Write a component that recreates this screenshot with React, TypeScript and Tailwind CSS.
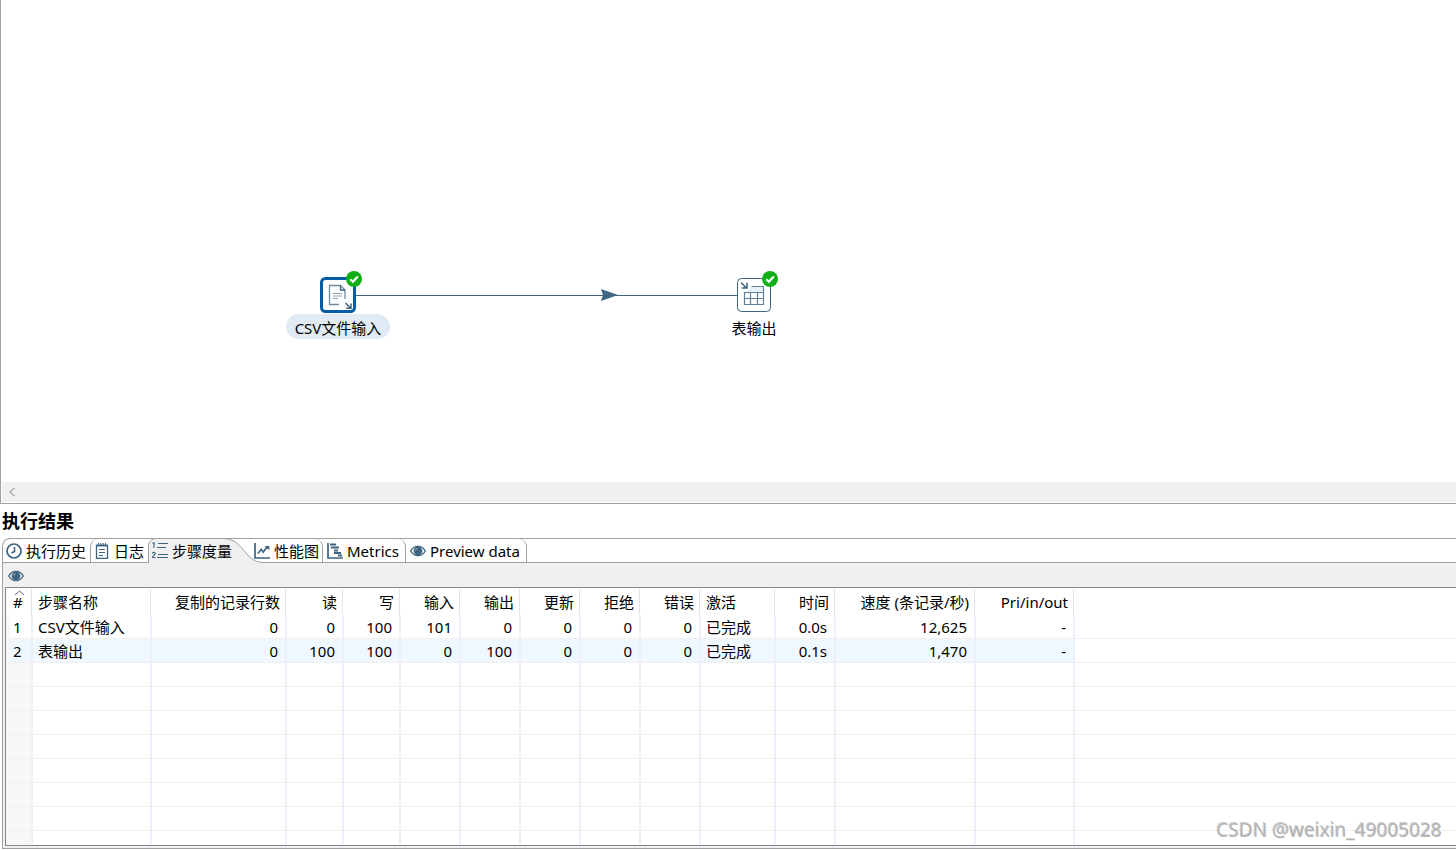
import React, { useState } from 'react'
import { clsx } from 'clsx'

interface IconProps {
  className?: string
}

const EyeIcon: React.FC<IconProps> = ({ className }) => (
  <svg className={className} width="16" height="16" viewBox="0 0 16 16" fill="none">
    <path d="M0.7 8C2.4 4.9 5 3.4 8 3.4s5.600 1.500 7.300 4.600c-1.700 3.100-4.300 4.600-7.300 4.600S2.400 11.100 0.700 8z" stroke="#3d6480" strokeWidth="1.300" />
    <circle cx="8" cy="8" r="4.400" fill="#3d6480" />
    <path d="M5.500 7.600a2.500 2.500 0 0 1 2-2" stroke="#b5c5d0" strokeWidth="0.900" />
  </svg>
)

const HistoryIcon: React.FC<IconProps> = ({ className }) => (
  <svg className={className} width="16" height="16" viewBox="0 0 16 16" fill="none" stroke="#3d6480">
    <circle cx="8" cy="8" r="7" strokeWidth="1.700" />
    <path d="M8.500 4v4.500L5.500 10" strokeWidth="1.600" />
  </svg>
)

const LogIcon: React.FC<IconProps> = ({ className }) => (
  <svg className={className} width="16" height="16" viewBox="0 0 16 16" fill="none" stroke="#3d6480">
    <path d="M2.500 2.500h11v13h-11z" strokeWidth="1.300" />
    <path d="M2 2.500h12" strokeWidth="1.600" />
    <path d="M4.500 0v3M6.800 0v3M9.200 0v3M11.500 0v3" strokeWidth="1" />
    <path d="M5 6.500h6M5 9.500h6M5 12.500h4" strokeWidth="1.200" />
  </svg>
)

const StepsIcon: React.FC<IconProps> = ({ className }) => (
  <svg className={className} width="16" height="17" viewBox="0 0 16 17" fill="none" stroke="#3d6480">
    <path d="M0.500 1.500L2 0.800V6" strokeWidth="1.100" />
    <path d="M0.500 11.500c0-1.500 2.700-1.500 2.700 0 0 1.200-2.700 2.500-2.700 4h3" strokeWidth="1.100" />
    <path d="M6 1.500h10M5 5.500h9" strokeWidth="1.200" />
    <path d="M6 12.500h10M5 15.500h11" strokeWidth="1.200" />
  </svg>
)

const ChartIcon: React.FC<IconProps> = ({ className }) => (
  <svg className={className} width="16" height="16" viewBox="0 0 16 16" fill="none" stroke="#3d6480">
    <path d="M1 0v15h15" strokeWidth="1.700" />
    <path d="M4 10.500l3.200-4.200 2 2.700 3.800-4.800" strokeWidth="1.700" />
    <path d="M10.500 3h4.800v4.300z" fill="#3d6480" stroke="none" />
  </svg>
)

const MetricsIcon: React.FC<IconProps> = ({ className }) => (
  <svg className={className} width="16" height="16" viewBox="0 0 16 16" fill="none" stroke="#3d6480">
    <path d="M1 0v15h15" strokeWidth="1.700" />
    <path d="M3 1.500h6M4 4.500h8M7 7.500h4M7 10h7M11 12.500h4" strokeWidth="1.800" />
  </svg>
)

const SuccessBadge: React.FC<IconProps> = ({ className }) => (
  <svg className={className} width="16" height="16" viewBox="0 0 16 16" fill="none">
    <circle cx="8" cy="8" r="8" fill="#0fb116" />
    <path d="M4.300 8.300l2.600 2.500 4.900-5.300" stroke="#fff" strokeWidth="2.200" />
  </svg>
)

const CsvInputIcon = () => (
  <svg width="36" height="36" viewBox="0 0 36 36" fill="none">
    <rect x="1.500" y="1.500" width="33" height="33" rx="4" fill="#fff" stroke="#005da6" strokeWidth="3" />
    <path d="M19 27.500H9.500v-19h11l4.500 4.500v9" stroke="#6f8da2" strokeWidth="1.300" />
    <path d="M20.500 8.500V13H25" stroke="#3d6480" strokeWidth="1.300" />
    <path d="M13 16.500h9M13 19h9M13 21.500h5" stroke="#8ba3b5" strokeWidth="1" />
    <path d="M25.500 26l4.500 4.500M31 26.500v4.700h-4.700" stroke="#3d6480" strokeWidth="1.500" />
  </svg>
)

const TableOutputIcon = () => (
  <svg width="34" height="34" viewBox="0 0 34 34" fill="none">
    <rect x="0.500" y="0.500" width="33" height="33" rx="4" fill="#fff" stroke="#3d6480" />
    <path d="M15 8.500h11v6H8z" fill="#e8f2fa" />
    <path d="M14.500 8.500h12v18h-19v-12h19M7.500 20.500h19M13.500 14.500v12M20.500 14.500v12" stroke="#5f809a" strokeWidth="1.200" />
    <path d="M4 4.500l5 5M10 4.800v5.200H4.800" stroke="#3d6480" strokeWidth="1.500" />
  </svg>
)

const tabs = [
  { icon: HistoryIcon, label: '执行历史', style: 'w-[88px] pl-[3px] rounded-tl-lg border-l' },
  { icon: LogIcon, label: '日志', style: 'w-[58px] pl-[3px] rounded-tl-lg border-l' },
  { icon: StepsIcon, label: '步骤度量', style: 'w-[102px] pl-1' },
  { icon: ChartIcon, label: '性能图', style: 'w-[73px] pl-1 rounded-tr-lg border-r' },
  { icon: MetricsIcon, label: 'Metrics', style: 'w-[83px] pl-1 rounded-tr-lg border-r' },
  { icon: EyeIcon, label: 'Preview data', style: 'w-[121px] pl-1 rounded-tr-lg border-r' },
]

const columns = [
  { label: '#', width: 'w-[27px]', left: true },
  { label: '步骤名称', width: 'w-[119px]', left: true },
  { label: '复制的记录行数', width: 'w-[135px]' },
  { label: '读', width: 'w-[57px]' },
  { label: '写', width: 'w-[57px]' },
  { label: '输入', width: 'w-[60px]' },
  { label: '输出', width: 'w-[60px]' },
  { label: '更新', width: 'w-[60px]' },
  { label: '拒绝', width: 'w-[60px]' },
  { label: '错误', width: 'w-[60px]' },
  { label: '激活', width: 'w-[75px]', left: true },
  { label: '时间', width: 'w-[60px]' },
  { label: '速度 (条记录/秒)', width: 'w-[140px]' },
  { label: 'Pri/in/out', width: 'w-[99px]' },
]

const rows = [
  ['1', 'CSV文件输入', '0', '0', '100', '101', '0', '0', '0', '0', '已完成', '0.0s', '12,625', '-'],
  ['2', '表输出', '0', '100', '100', '0', '100', '0', '0', '0', '已完成', '0.1s', '1,470', '-'],
]

const emptyRows = [1, 2, 3, 4, 5, 6, 7]

const Canvas = () => (
  <main className="relative min-h-[360px] flex-1 overflow-hidden border-l border-[#a0a0a0] bg-white">
    <svg className="absolute left-[355px] top-[287px]" width="382" height="16" viewBox="0 0 382 16">
      <path d="M0 8.500h382" stroke="#3d6480" />
      <path d="M245 2l17 6-17 6 2-6z" fill="#3d6480" />
    </svg>

    <div className="absolute left-[285px] top-[277px] flex w-[104px] flex-col items-center">
      <CsvInputIcon />
      <SuccessBadge className="absolute -top-1.5 left-[60px]" />
      <span className="mt-px h-[25px] w-full rounded-full bg-[#e1ebf5] text-center leading-[29px]">CSV文件输入</span>
    </div>

    <div className="absolute left-[701px] top-[278px] flex w-[104px] flex-col items-center">
      <TableOutputIcon />
      <SuccessBadge className="absolute -top-[7px] left-[60px]" />
      <span className="mt-0.5 leading-[29px]">表输出</span>
    </div>
  </main>
)

const StepMetrics = () => (
  <div className="overflow-hidden border border-r-0 border-[#828790] bg-white">
    <table className="w-full table-fixed border-separate border-spacing-0">
      <thead>
        <tr className="h-[27px]">
          {columns.map((col) => (
            <th key={col.label} scope="col" className={clsx('relative p-0 font-normal', col.width)}>
              {col.label === '#' && (
                <svg className="absolute left-2 top-0.5" width="11" height="6" viewBox="0 0 11 6" fill="none">
                  <path d="M1 5l4.500-4L10 5" stroke="#606060" />
                </svg>
              )}
              <div
                className={clsx(
                  'mr-px mt-px h-[26px] whitespace-nowrap border-r border-[#e5e5e5] leading-[26px]',
                  col.left ? 'text-left' : 'pr-[5px] text-right',
                  col.left && (col.label === '#' ? 'pl-[7px]' : 'pl-[5px]')
                )}
              >
                {col.label}
              </div>
            </th>
          ))}
          <th className="p-0" />
        </tr>
      </thead>
      <tbody>
        {rows.map((row, index) => (
          <tr key={row[0]} className="h-6">
            {row.map((value, i) => (
              <td
                key={columns[i].label}
                className={clsx(
                  'whitespace-nowrap border-b border-r-2 border-b-[#f0f0f0] border-r-[#ebf0f9] pb-0 pt-px leading-[22px]',
                  index === 1 && 'bg-[#f0f8ff]',
                  i === 0 && 'border-l-4 border-l-[#f7f7f7] pl-[3px] pr-0',
                  i > 0 && (columns[i].left ? 'pl-[5px] pr-0 text-left' : 'pl-0 pr-[7px] text-right')
                )}
              >
                {value}
              </td>
            ))}
            <td className="border-b border-[#f0f0f0] p-0" />
          </tr>
        ))}
        {emptyRows.map((row) => (
          <tr key={row} className="h-6">
            {columns.map((col, i) => (
              <td
                key={col.label}
                className={clsx('border-b border-r-2 border-b-[#f0f0f0] border-r-[#ebf0f9] p-0', i === 0 && 'bg-[#f7f7f7]')}
              />
            ))}
            <td className="border-b border-[#f0f0f0] p-0" />
          </tr>
        ))}
        <tr className="h-3.5">
          {columns.map((col, i) => (
            <td key={col.label} className={clsx('border-r-2 border-[#ebf0f9] p-0', i === 0 && 'bg-[#f7f7f7]')} />
          ))}
          <td className="p-0" />
        </tr>
      </tbody>
    </table>
  </div>
)

export default function App() {
  const [activeTab, setActiveTab] = useState('步骤度量')

  return (
    <div className="relative flex h-screen min-w-[1100px] flex-col overflow-hidden bg-white font-['Noto_Sans','Noto_Sans_CJK_SC',sans-serif] text-[15px] text-black">
      <Canvas />

      {/* Horizontal scroll bar */}
      <div className="flex h-[22px] shrink-0 border-b border-l border-[#a0a0a0] bg-white pb-px pl-px">
        <div className="flex flex-1 bg-[#f0f0f0]">
          <button type="button" aria-label="Scroll left" className="flex w-5 items-center justify-center">
            <svg width="8" height="10" viewBox="0 0 8 10" fill="none">
              <path d="M6.500 1L2 5l4.500 4" stroke="#b0b0b0" strokeWidth="1.600" />
            </svg>
          </button>
        </div>
      </div>

      <section className="shrink-0">
        <h2 className="h-[34px] pl-0.5 text-lg font-bold leading-[35px]">执行结果</h2>

        <div className="ml-0.5">
          {/* Tab strip */}
          <div role="tablist" className="flex h-[25px] rounded-tl-lg border-b border-t border-[#a0a0a0] bg-white">
            {tabs.map((tab) => {
              const Icon = tab.icon
              const isCurved = tab.label === '步骤度量'

              return (
                <button
                  key={tab.label}
                  type="button"
                  role="tab"
                  aria-selected={activeTab === tab.label}
                  onClick={() => setActiveTab(tab.label)}
                  className={clsx('relative flex h-full items-center whitespace-nowrap border-[#a0a0a0]', tab.style)}
                >
                  {isCurved && (
                    <svg className="absolute -top-px left-0" width="116" height="25" viewBox="0 0 116 25" fill="none">
                      <path d="M0 25V8C0 4 4 0.500 8 0.500h67c22 0 20 24 41 24V25z" fill="#f0f0f0" />
                      <path d="M0.500 25V8C0.500 4 4 0.500 8 0.500h67c22 0 20 24 41 24" stroke="#a0a0a0" />
                    </svg>
                  )}
                  <Icon className="relative mr-1 shrink-0" />
                  <span className="relative pt-0.5 leading-[21px]">{tab.label}</span>
                </button>
              )
            })}
          </div>

          <div className="border-b border-l border-[#a0a0a0] bg-[#f0f0f0] pb-0.5 pl-0.5">
            <div className="flex h-6 items-center pl-[3px] pt-0.5">
              <button type="button" aria-label="Preview">
                <EyeIcon />
              </button>
            </div>
            <StepMetrics />
          </div>
        </div>
        <div className="h-px bg-white" />
      </section>

      <p className="absolute bottom-1.5 right-3.5 text-[19px] leading-7 text-[#b4b4b4] [text-shadow:-1px_-1px_0_#a0a0a080,1px_1px_0_#ffffff]">
        CSDN @weixin_49005028
      </p>
    </div>
  )
}
